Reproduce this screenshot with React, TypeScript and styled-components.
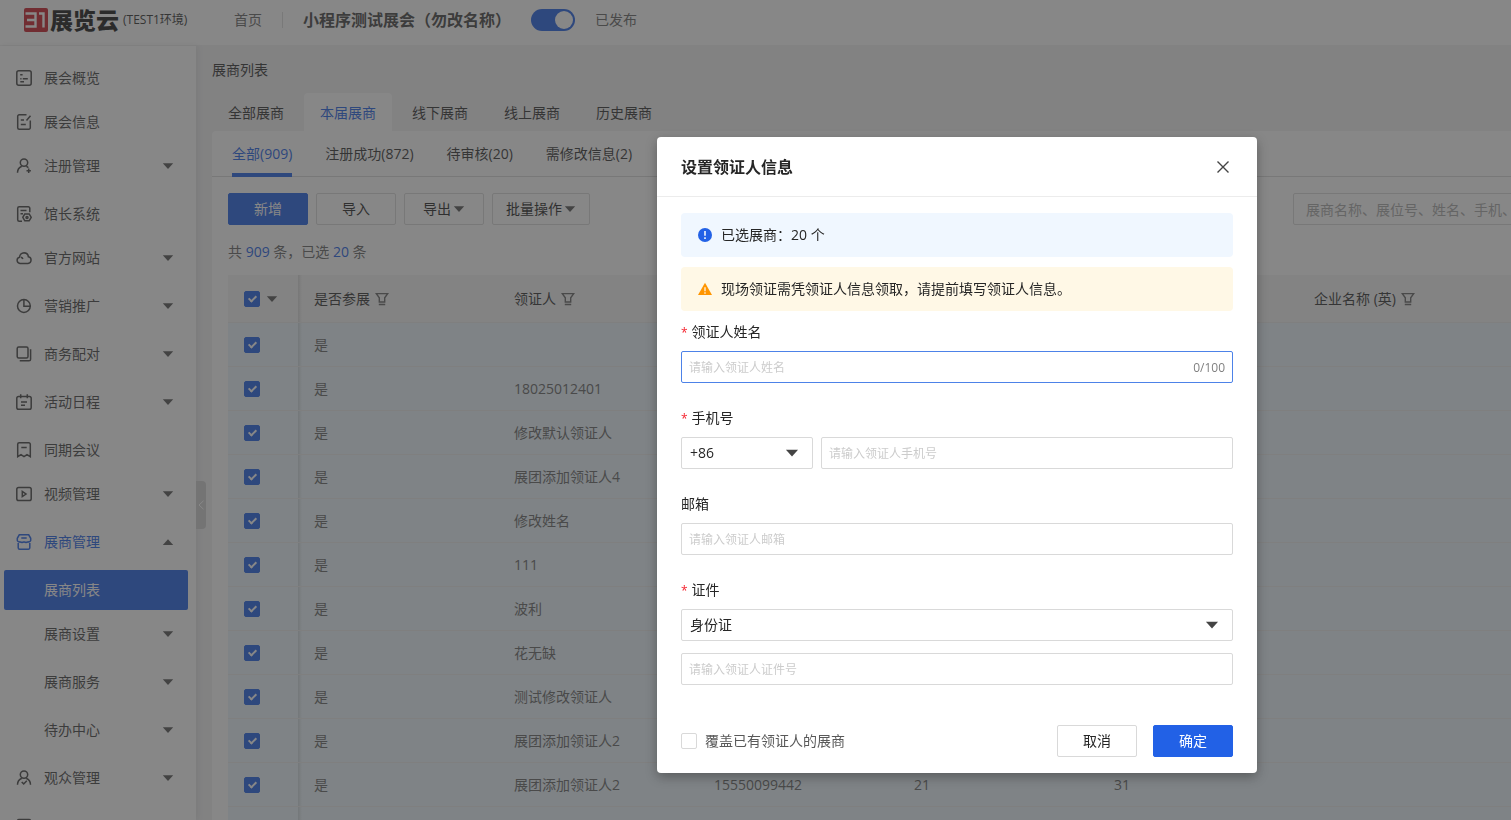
import React, { useState } from "react";
import styled, { createGlobalStyle, css } from "styled-components";

const BLUE = "#2261e6";

const GlobalStyle = createGlobalStyle`
  *, *::before, *::after { box-sizing: border-box; }
  html, body, #root { height: 100%; }
  body {
    margin: 0;
    overflow: hidden;
    font-family: "Open Sans", "Noto Sans CJK SC", sans-serif;
    font-size: 14px;
    line-height: 22px;
    color: #333;
  }
  button, input, select { font: inherit; color: inherit; }
  ul { list-style: none; margin: 0; padding: 0; }
  a { color: inherit; text-decoration: none; }
`;

/* ---------- shared pieces ---------- */

const Caret = ({ up = false, size = 12 }: { up?: boolean; size?: number }) => (
  <svg width={size} height={size} viewBox="0 0 12 12" fill="currentColor" aria-hidden="true">
    <path d={up ? "M.8 9 6 3.2 11.200 9z" : "M.8 3.200h10.400L6 9z"} />
  </svg>
);

const FilterIcon = () => (
  <svg width="14" height="14" viewBox="0 0 14 14" fill="none" stroke="#666" strokeWidth="1.400" aria-hidden="true">
    <path d="M1.300 1.600h11.400L9.700 5.800v4.200H4.300V5.800zM3.800 12.500h6.400" />
  </svg>
);

const Check = styled.input.attrs({ type: "checkbox" })`
  appearance: none;
  flex: none;
  display: block;
  position: relative;
  width: 16px;
  height: 16px;
  margin: 0;
  border: 1px solid #d9d9d9;
  border-radius: 2px;
  background: #fff;
  &:checked {
    background: ${BLUE};
    border-color: ${BLUE};
  }
  &:checked::after {
    content: "";
    position: absolute;
    left: 5px;
    top: 2px;
    width: 5px;
    height: 8px;
    border: solid #fff;
    border-width: 0 2px 2px 0;
    transform: rotate(45deg);
  }
`;

const Button = styled.button<{ $primary?: boolean; $auto?: boolean }>`
  display: inline-flex;
  align-items: center;
  justify-content: center;
  gap: 2px;
  height: 32px;
  width: ${(p) => (p.$auto ? "auto" : "80px")};
  padding: 0 ${(p) => (p.$auto ? "13px" : "0")};
  border: 1px solid ${(p) => (p.$primary ? BLUE : "#d9d9d9")};
  border-radius: 2px;
  background: ${(p) => (p.$primary ? BLUE : "#fff")};
  color: ${(p) => (p.$primary ? "#fff" : "#262626")};
  white-space: nowrap;
  svg { color: #555; }
`;

/* ---------- page frame ---------- */

const Page = styled.div`
  height: 100vh;
  display: flex;
  flex-direction: column;
  overflow: hidden;
  background: #f2f2f3;
`;

const Header = styled.header`
  flex: none;
  display: flex;
  align-items: center;
  height: 46px;
  padding: 0 24px 6px;
  border-bottom: 1px solid #f2f2f3;
  background: #fff;
`;

const Brand = styled.a`
  display: flex;
  align-items: center;
  width: 210px;
`;

const BrandName = styled.strong`
  margin-left: 2px;
  font-size: 23px;
  line-height: 24px;
  font-weight: 900;
  color: #1a1a1a;
`;

const BrandEnv = styled.span`
  margin-left: 4px;
  font-size: 12px;
  white-space: nowrap;
`;

const HomeLink = styled.a`
  padding-right: 20px;
  color: #666;
`;

const EventName = styled.h1`
  margin: 0;
  padding-left: 21px;
  font-size: 16px;
  line-height: 24px;
  white-space: nowrap;
  position: relative;
  color: #444;
  &::before {
    content: "";
    position: absolute;
    left: 0;
    top: 4px;
    height: 16px;
    border-left: 1px solid #dcdcdc;
  }
`;

const Publish = styled.label`
  display: flex;
  align-items: center;
  gap: 20px;
  margin-left: 20px;
  color: #666;
`;

const Switch = styled.input.attrs({ type: "checkbox", role: "switch" })`
  appearance: none;
  position: relative;
  width: 44px;
  height: 22px;
  margin: 0;
  border-radius: 11px;
  background: #bfbfbf;
  &:checked { background: ${BLUE}; }
  &::after {
    content: "";
    position: absolute;
    top: 2px;
    left: 2px;
    width: 18px;
    height: 18px;
    border-radius: 50%;
    background: #fff;
  }
  &:checked::after { left: 24px; }
`;

const Columns = styled.div`
  flex: 1;
  display: flex;
  min-height: 0;
`;

/* ---------- sidebar ---------- */

const Sidebar = styled.nav`
  flex: none;
  position: relative;
  z-index: 1;
  width: 196px;
  padding: 12px 8px 0 4px;
  background: #fff;
  box-shadow: 2px 0 6px rgba(0, 0, 0, 0.08);
`;

const MenuItem = styled.li<{ $group?: boolean }>`
  margin-bottom: ${(p) => (p.$group ? "8px" : "4px")};
`;

const MenuLink = styled.a<{ $state?: "open" | "selected" }>`
  display: flex;
  align-items: center;
  height: 40px;
  padding: 0 14px 0 12px;
  border-radius: 2px;
  color: #444;
  ${(p) => p.$state === "open" && css`color: ${BLUE};`}
  ${(p) => p.$state === "selected" && css`color: #fff; background: ${BLUE};`}
`;

const MenuIcon = styled.span`
  display: flex;
  width: 28px;
`;

const MenuCaret = styled.span`
  display: flex;
  margin-left: auto;
  color: #555;
`;

const Collapse = styled.button`
  position: absolute;
  left: 196px;
  top: 435px;
  display: flex;
  align-items: center;
  justify-content: center;
  width: 10px;
  height: 48px;
  padding: 0;
  border: 0;
  border-radius: 0 4px 4px 0;
  background: #cfcfcf;
  color: #fff;
`;

type IconName =
  | "overview" | "info" | "register" | "hall" | "cloud" | "pie" | "copy"
  | "calendar" | "bookmark" | "video" | "store" | "audience" | "box";

const iconPaths: Record<IconName, React.ReactNode> = {
  overview: (
    <>
      <rect x=".8" y=".8" width="14.400" height="14.400" rx="2" />
      <path d="M4.200 4.700h2.400M4.300 8.700h1.200M6.800 8.700h5M4.300 11.700h3.700" />
    </>
  ),
  info: (
    <>
      <path d="M10.500.8H3.200a1.500 1.500 0 0 0-1.500 1.500v11.400a1.500 1.500 0 0 0 1.500 1.500h9.600a1.500 1.500 0 0 0 1.500-1.500V6.500" />
      <path d="M4.800 6h3.200M4.800 10.500h5M14.500 1.700l-4 4.800" />
    </>
  ),
  register: (
    <>
      <circle cx="8" cy="4.600" r="3.700" />
      <path d="M1.500 14.800c0-3 1.500-5.300 4.300-6.500M10.300 8.300c.9.400 1.500.8 2 1.400M12.700 10.500v4.400M10.500 12.700h4.400" />
    </>
  ),
  hall: (
    <>
      <path d="M6 15.200H3.200a1.500 1.500 0 0 1-1.500-1.500V2.300A1.500 1.500 0 0 1 3.200.8h9.100a1.500 1.500 0 0 1 1.500 1.500v4M4.500 4.500h6M4.500 7.700h2.500" />
      <path d="M8.800 7.900h4.400l2 3.400-2 3.500H8.800l-2-3.500z" />
      <circle cx="11" cy="11.400" r="1" />
    </>
  ),
  cloud: (
    <path d="M4 13.500a3.200 3.200 0 0 1-.4-6.300A4.500 4.500 0 0 1 8 2.800a4.500 4.500 0 0 1 4.400 4 3.400 3.400 0 0 1-.4 6.700zM5 7.200c.9.200 1.600.9 1.900 1.800" />
  ),
  pie: (
    <>
      <circle cx="7.900" cy="8" r="6.400" />
      <path d="M7.900 1.600V8.200H14.300" />
    </>
  ),
  copy: (
    <>
      <rect x="1.200" y="1" width="10.800" height="11" rx="1.500" />
      <path d="M13.800 4h.8v9.200a1.600 1.600 0 0 1-1.600 1.600H4.500V14" />
    </>
  ),
  calendar: (
    <>
      <rect x=".8" y="2.500" width="14.400" height="12.700" rx="1.800" />
      <path d="M4.700.3v4M11.300.3v4M5 8h6M5 11.300h4" />
    </>
  ),
  bookmark: (
    <path d="M1.700 14.700V2.300A1.500 1.500 0 0 1 3.200.8h9.600a1.500 1.500 0 0 1 1.500 1.500v12.400l-3.300-2.100L8 14.700l-3-2.100zM5.300 5.500h5.400" />
  ),
  video: (
    <>
      <rect x=".8" y="1.500" width="14.400" height="13" rx="1.800" />
      <path d="M6.300 5.400v5.200L10 8z" />
    </>
  ),
  store: (
    <>
      <path d="M3.300.8h9.400l2 3.500v2a2 2 0 0 1-2.700 1.500 4 4 0 0 1-4 0 4 4 0 0 1-4 0A2 2 0 0 1 1.300 6.300v-2z" />
      <path d="M2.200 9v4.700a1.500 1.500 0 0 0 1.500 1.500h8.600a1.500 1.500 0 0 0 1.500-1.500V9M5.300 4h5.400" />
    </>
  ),
  audience: (
    <>
      <circle cx="8" cy="4.600" r="3.700" />
      <path d="M1.500 14.800c0-3 1.500-5.300 4.300-6.500M10.200 8.300c2.800 1.200 4.300 3.500 4.300 6.500M5.700 12l2 1.900 3.100-3.200" />
    </>
  ),
  box: <rect x="1.500" y="1.500" width="13" height="13" rx="1.500" />,
};

const Icon = ({ name }: { name: IconName }) => (
  <svg width="16" height="16" viewBox="0 0 16 16" fill="none" stroke="currentColor" strokeWidth="1.500" aria-hidden="true">
    {iconPaths[name]}
  </svg>
);

interface MenuEntry {
  label: string;
  icon?: IconName;
  group?: boolean;
  state?: "open" | "selected";
}

const menu: MenuEntry[] = [
  { label: "展会概览", icon: "overview" },
  { label: "展会信息", icon: "info" },
  { label: "注册管理", icon: "register", group: true },
  { label: "馆长系统", icon: "hall" },
  { label: "官方网站", icon: "cloud", group: true },
  { label: "营销推广", icon: "pie", group: true },
  { label: "商务配对", icon: "copy", group: true },
  { label: "活动日程", icon: "calendar", group: true },
  { label: "同期会议", icon: "bookmark" },
  { label: "视频管理", icon: "video", group: true },
  { label: "展商管理", icon: "store", group: true, state: "open" },
  { label: "展商列表", state: "selected" },
  { label: "展商设置", group: true },
  { label: "展商服务", group: true },
  { label: "待办中心", group: true },
  { label: "观众管理", icon: "audience", group: true },
  { label: "", icon: "box" },
];

/* ---------- main area ---------- */

const Main = styled.main`
  flex: 1;
  min-width: 0;
  padding: 13px 0 0 16px;
  overflow: hidden;
`;

const Crumb = styled.h2`
  margin: 0;
  font-size: 14px;
  line-height: 22px;
  font-weight: 400;
`;

const Tabs = styled.div`
  display: flex;
  gap: 4px;
  margin-top: 12px;
`;

const Tab = styled.button<{ $active?: boolean }>`
  height: 38px;
  padding: 2px 16px 0;
  border: 0;
  border-radius: 4px 4px 0 0;
  background: ${(p) => (p.$active ? "#fff" : "transparent")};
  color: ${(p) => (p.$active ? BLUE : "#333")};
`;

const Panel = styled.section`
  min-width: 1361px;
  border-radius: 4px 4px 0 0;
  background: #fff;
`;

const StatusTabs = styled.div`
  display: flex;
  gap: 33px;
  padding: 0 20px;
  border-bottom: 1px solid #d9d9d9;
`;

const StatusTab = styled.button<{ $active?: boolean }>`
  height: 46px;
  margin-bottom: -1px;
  padding: 4px 0 0;
  border: 0;
  border-bottom: 4px solid ${(p) => (p.$active ? BLUE : "transparent")};
  background: none;
  color: ${(p) => (p.$active ? BLUE : "#333")};
`;

const PanelBody = styled.div`
  padding: 16px;
`;

const Toolbar = styled.div`
  display: flex;
  gap: 8px;
`;

const Search = styled.input`
  width: 264px;
  height: 32px;
  margin-left: auto;
  padding: 0 12px;
  border: 1px solid #d9d9d9;
  border-radius: 2px;
  background: #fff;
  &::placeholder { color: #aaa; }
`;

const Summary = styled.p`
  margin: 16px 0 12px;
  color: #666;
  em { font-style: normal; color: ${BLUE}; }
`;

const Table = styled.table`
  width: 100%;
  table-layout: fixed;
  border-spacing: 0;
  text-align: left;

  th, td {
    height: 44px;
    padding: 0 16px;
    border-bottom: 1px solid #ebebeb;
    font-weight: 400;
    white-space: nowrap;
  }
  th { height: 48px; background-color: #f5f5f5; }
  td { background-color: #ebf5fc; color: #666; }
  th:nth-child(2), td:nth-child(2) {
    background-image: linear-gradient(to right, rgba(0, 0, 0, 0.12), transparent);
    background-size: 4px 100%;
    background-repeat: no-repeat;
  }
`;

const HeadCell = styled.span`
  display: flex;
  align-items: center;
  gap: 5px;
`;

const SelectAll = styled.span`
  display: flex;
  align-items: center;
  gap: 6px;
  color: #555;
`;

const rows: string[][] = [
  ["是", ""],
  ["是", "18025012401"],
  ["是", "修改默认领证人"],
  ["是", "展团添加领证人4"],
  ["是", "修改姓名"],
  ["是", "111"],
  ["是", "波利"],
  ["是", "花无缺"],
  ["是", "测试修改领证人"],
  ["是", "展团添加领证人2"],
  ["是", "展团添加领证人2", "15550099442", "21", "31"],
  [],
];

/* ---------- dialog ---------- */

const Mask = styled.div`
  position: fixed;
  inset: 0;
  z-index: 10;
  display: flex;
  justify-content: flex-end;
  align-items: flex-start;
  padding: 137px 254px 0 0;
  background: rgba(55, 55, 55, 0.6);
`;

const Dialog = styled.div`
  width: 600px;
  border-radius: 4px;
  background: #fff;
  box-shadow: 0 4px 12px rgba(0, 0, 0, 0.3);
  color: #262626;
`;

const DialogHeader = styled.div`
  display: flex;
  align-items: center;
  justify-content: space-between;
  height: 60px;
  padding: 0 24px;
  border-bottom: 1px solid #ececec;
`;

const DialogTitle = styled.h3`
  margin: 0;
  font-size: 16px;
  line-height: 24px;
  font-weight: 700;
`;

const Close = styled.button`
  display: flex;
  align-items: center;
  justify-content: center;
  width: 20px;
  height: 20px;
  padding: 0;
  border: 0;
  background: none;
`;

const DialogBody = styled.form`
  display: flex;
  flex-direction: column;
  gap: 24px;
  padding: 16px 24px 24px;
`;

const Alerts = styled.div`
  display: flex;
  flex-direction: column;
  gap: 10px;
  margin-bottom: -14px;
`;

const Alert = styled.div<{ $warn?: boolean }>`
  display: flex;
  align-items: center;
  gap: 8px;
  height: 44px;
  padding: 0 16px;
  border-radius: 4px;
  background: ${(p) => (p.$warn ? "#fff8e6" : "#f0f7ff")};
`;

const Field = styled.div`
  display: flex;
  flex-direction: column;
`;

const Label = styled.label<{ $required?: boolean }>`
  margin-bottom: 8px;
  ${(p) => p.$required && css`
    &::before {
      content: "*";
      margin-right: 4px;
      font-size: 12px;
      line-height: 12px;
      color: #f5222d;
    }
  `}
`;

const FieldRow = styled.div`
  display: flex;
  gap: 8px;
`;

const InputBox = styled.div<{ $focus?: boolean; $spaced?: boolean }>`
  flex: 1;
  display: flex;
  align-items: center;
  height: 32px;
  min-height: 32px;
  padding: 2px 7px 0;
  margin-top: ${(p) => (p.$spaced ? "12px" : "0")};
  border: 1px solid ${(p) => (p.$focus ? "#4d82e8" : "#d9d9d9")};
  border-radius: 2px;
  background: #fff;
`;

const Input = styled.input`
  flex: 1;
  min-width: 0;
  padding: 0;
  border: 0;
  outline: 0;
  background: none;
  font-size: 12px;
  line-height: 20px;
  &::placeholder { color: #ccc; }
`;

const Counter = styled.span`
  font-size: 12px;
  line-height: 20px;
  color: #808080;
`;

const SelectBox = styled.div<{ $narrow?: boolean }>`
  position: relative;
  width: ${(p) => (p.$narrow ? "132px" : "100%")};
  svg {
    position: absolute;
    right: 14px;
    top: 9px;
    pointer-events: none;
    color: #444;
  }
`;

const Select = styled.select`
  appearance: none;
  display: block;
  width: 100%;
  height: 32px;
  padding: 0 8px;
  border: 1px solid #d9d9d9;
  border-radius: 2px;
  background: #fff;
`;

const DialogFooter = styled.div`
  display: flex;
  align-items: center;
  gap: 16px;
  padding: 16px 24px;
`;

const Override = styled.label`
  display: flex;
  align-items: center;
  gap: 8px;
  margin-right: auto;
  color: #595959;
`;

const Logo = () => (
  <svg width="24" height="24" viewBox="0 0 24 24" aria-hidden="true">
    <rect width="24" height="24" rx="2" fill="#c8202c" />
    <path d="M1.500 5.500h10v13h-10M3 12h8.500M15 5.500h4.500v14" fill="none" stroke="#fff" strokeWidth="2.400" />
  </svg>
);

export default function App() {
  const [name, setName] = useState("");

  return (
    <>
      <GlobalStyle />
      <Page>
        <Header>
          <Brand href="#">
            <Logo />
            <BrandName>展览云</BrandName>
            <BrandEnv>(TEST1环境)</BrandEnv>
          </Brand>
          <HomeLink href="#">首页</HomeLink>
          <EventName>小程序测试展会（勿改名称）</EventName>
          <Publish>
            <Switch defaultChecked />
            已发布
          </Publish>
        </Header>
        <Columns>
          <Sidebar>
            <ul>
              {menu.map((m) => (
                <MenuItem key={m.label} $group={m.group}>
                  <MenuLink href="#" $state={m.state}>
                    <MenuIcon>{m.icon && <Icon name={m.icon} />}</MenuIcon>
                    {m.label}
                    {m.group && (
                      <MenuCaret>
                        <Caret up={m.state === "open"} />
                      </MenuCaret>
                    )}
                  </MenuLink>
                </MenuItem>
              ))}
            </ul>
            <Collapse aria-label="收起菜单">
              <svg width="6" height="10" viewBox="0 0 6 10" fill="none" stroke="currentColor" aria-hidden="true">
                <path d="M5.500.8 1 5l4.500 4.200" />
              </svg>
            </Collapse>
          </Sidebar>
          <Main>
            <Crumb>展商列表</Crumb>
            <Tabs>
              <Tab>全部展商</Tab>
              <Tab $active>本届展商</Tab>
              <Tab>线下展商</Tab>
              <Tab>线上展商</Tab>
              <Tab>历史展商</Tab>
            </Tabs>
            <Panel>
              <StatusTabs>
                <StatusTab $active>全部(909)</StatusTab>
                <StatusTab>注册成功(872)</StatusTab>
                <StatusTab>待审核(20)</StatusTab>
                <StatusTab>需修改信息(2)</StatusTab>
              </StatusTabs>
              <PanelBody>
                <Toolbar>
                  <Button $primary>新增</Button>
                  <Button>导入</Button>
                  <Button>导出<Caret /></Button>
                  <Button $auto>批量操作<Caret /></Button>
                  <Search aria-label="搜索" placeholder="展商名称、展位号、姓名、手机、" />
                </Toolbar>
                <Summary>
                  共 <em>909</em> 条，已选 <em>20</em> 条
                </Summary>
                <Table>
                  <colgroup>
                    <col width="70" />
                    <col width="200" />
                    <col width="200" />
                    <col width="200" />
                    <col width="200" />
                    <col width="200" />
                    <col />
                  </colgroup>
                  <thead>
                    <tr>
                      <th>
                        <SelectAll>
                          <Check defaultChecked aria-label="全选" />
                          <Caret />
                        </SelectAll>
                      </th>
                      <th><HeadCell>是否参展<FilterIcon /></HeadCell></th>
                      <th><HeadCell>领证人<FilterIcon /></HeadCell></th>
                      <th />
                      <th />
                      <th />
                      <th><HeadCell>企业名称 (英)<FilterIcon /></HeadCell></th>
                    </tr>
                  </thead>
                  <tbody>
                    {rows.map((cells, r) => (
                      <tr key={r}>
                        <td><Check defaultChecked aria-label="选择展商" /></td>
                        {[0, 1, 2, 3, 4, 5].map((c) => (
                          <td key={c}>{cells[c]}</td>
                        ))}
                      </tr>
                    ))}
                  </tbody>
                </Table>
              </PanelBody>
            </Panel>
          </Main>
        </Columns>
      </Page>

      <Mask>
        <Dialog role="dialog" aria-modal="true" aria-labelledby="dialog-title">
          <DialogHeader>
            <DialogTitle id="dialog-title">设置领证人信息</DialogTitle>
            <Close aria-label="关闭">
              <svg width="12" height="12" viewBox="0 0 12 12" fill="none" stroke="#444" strokeWidth="1.400" aria-hidden="true">
                <path d="M.5.5l11 11M11.500.5l-11 11" />
              </svg>
            </Close>
          </DialogHeader>
          <DialogBody id="collector-form">
            <Alerts>
              <Alert>
                <svg width="16" height="16" viewBox="0 0 16 16" aria-hidden="true">
                  <circle cx="8" cy="8" r="7" fill={BLUE} />
                  <path d="M8 4v4.800M8 10.300v1.700" stroke="#fff" strokeWidth="1.500" />
                </svg>
                已选展商：20 个
              </Alert>
              <Alert $warn>
                <svg width="16" height="16" viewBox="0 0 16 16" aria-hidden="true">
                  <path d="M8 1.800 15 14H1z" fill="#ff9500" />
                  <path d="M8 6.300v3.900M8 11.200v1.500" stroke="#fff" strokeWidth="1.200" />
                </svg>
                现场领证需凭领证人信息领取，请提前填写领证人信息。
              </Alert>
            </Alerts>
            <Field>
              <Label $required htmlFor="name">领证人姓名</Label>
              <InputBox $focus>
                <Input
                  id="name"
                  maxLength={100}
                  value={name}
                  onChange={(e) => setName(e.target.value)}
                  placeholder="请输入领证人姓名"
                />
                <Counter>{name.length}/100</Counter>
              </InputBox>
            </Field>
            <Field>
              <Label $required htmlFor="phone">手机号</Label>
              <FieldRow>
                <SelectBox $narrow>
                  <Select aria-label="国家区号"><option>+86</option></Select>
                  <Caret size={14} />
                </SelectBox>
                <InputBox>
                  <Input id="phone" type="tel" placeholder="请输入领证人手机号" />
                </InputBox>
              </FieldRow>
            </Field>
            <Field>
              <Label htmlFor="email">邮箱</Label>
              <InputBox>
                <Input id="email" type="email" placeholder="请输入领证人邮箱" />
              </InputBox>
            </Field>
            <Field>
              <Label $required htmlFor="id-type">证件</Label>
              <SelectBox>
                <Select id="id-type"><option>身份证</option></Select>
                <Caret size={14} />
              </SelectBox>
              <InputBox $spaced>
                <Input aria-label="证件号" placeholder="请输入领证人证件号" />
              </InputBox>
            </Field>
          </DialogBody>
          <DialogFooter>
            <Override>
              <Check />
              覆盖已有领证人的展商
            </Override>
            <Button type="button">取消</Button>
            <Button type="submit" form="collector-form" $primary>确定</Button>
          </DialogFooter>
        </Dialog>
      </Mask>
    </>
  );
}
